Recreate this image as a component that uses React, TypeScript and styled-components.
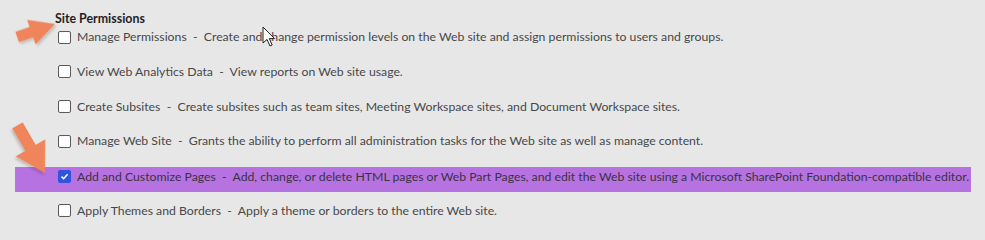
import React from "react";
import styled, { createGlobalStyle } from "styled-components";

const Global = createGlobalStyle`
  html, body { margin: 0; padding: 0; background: #e7e7e7; }
  body { font-family: "Lato", "Noto Sans", sans-serif; }
`;

const Page = styled.div`
  position: relative;
  width: 985px;
  height: 229px;
  padding-top: 12px;
  box-sizing: border-box;
  overflow: hidden;
`;

const Title = styled.div`
  margin-left: 55px;
  height: 14px;
  line-height: 14px;
  font-size: 12.4px;
  font-weight: 700;
  color: #1f1f1f;
`;

const List = styled.div`
  display: flex;
  flex-direction: column;
  margin-left: 15px;
  width: 956px;
`;

const Row = styled.div<{ $hl?: boolean }>`
  display: flex;
  align-items: ${(p) => (p.$hl ? "flex-start" : "center")};
  gap: 6px;
  box-sizing: border-box;
  padding-left: 43px;
  height: ${(p) => (p.$hl ? "25px" : "22px")};
  padding-top: ${(p) => (p.$hl ? "3px" : "0")};
  margin-top: ${(p) => (p.$hl ? "1.8px" : "0")};
  margin-bottom: ${(p) => (p.$hl ? "8px" : "12.8px")};
  background: ${(p) => (p.$hl ? "#b772e2" : "transparent")};
`;

const Box = styled.span<{ $checked?: boolean }>`
  flex: none;
  width: 13px;
  height: 13px;
  box-sizing: border-box;
  border-radius: 2px;
  border: 1px solid ${(p) => (p.$checked ? "#2f55e0" : "#5a5a5a")};
  background: ${(p) => (p.$checked ? "#2f55e0" : "#ffffff")};
  display: flex;
  align-items: center;
  justify-content: center;
`;

const Label = styled.span<{ $hl?: boolean }>`
  font-size: 12.25px;
  line-height: 14px;
  white-space: pre;
  color: ${(p) => (p.$hl ? "#3a3340" : "#474747")};
`;

const Overlay = styled.svg`
  position: absolute;
  left: 0;
  top: 0;
  pointer-events: none;
`;

const rows = [
  "Manage Permissions  -  Create and change permission levels on the Web site and assign permissions to users and groups.",
  "View Web Analytics Data  -  View reports on Web site usage.",
  "Create Subsites  -  Create subsites such as team sites, Meeting Workspace sites, and Document Workspace sites.",
  "Manage Web Site  -  Grants the ability to perform all administration tasks for the Web site as well as manage content.",
  "Add and Customize Pages  -  Add, change, or delete HTML pages or Web Part Pages, and edit the Web site using a Microsoft SharePoint Foundation-compatible editor.",
  "Apply Themes and Borders  -  Apply a theme or borders to the entire Web site.",
];

function arrowPoints(L: number, H: number, W: number, s: number) {
  return [
    [0, 0],
    [-H, -W],
    [-H, -s],
    [-L, -s],
    [-L, s],
    [-H, s],
    [-H, W],
  ]
    .map((p) => p.join(","))
    .join(" ");
}

export default function App() {
  return (
    <>
      <Global />
      <Page>
        <Title>Site Permissions</Title>
        <List>
          {rows.map((t, i) => {
            const hl = i === 4;
            return (
              <Row key={i} $hl={hl}>
                <Box $checked={hl}>
                  {hl && (
                    <svg width="9" height="9" viewBox="0 0 9 9">
                      <path d="M1.5 4.6 L3.6 6.7 L7.6 2.2" fill="none" stroke="#fff" strokeWidth="1.6" />
                    </svg>
                  )}
                </Box>
                <Label $hl={hl}>{t}</Label>
              </Row>
            );
          })}
        </List>
        <Overlay width="985" height="229" viewBox="0 0 985 229">
          <defs>
            <filter id="sh" x="-30%" y="-30%" width="160%" height="160%">
              <feDropShadow dx="1" dy="2" stdDeviation="1.5" floodColor="#000" floodOpacity="0.22" />
            </filter>
          </defs>
          <polygon
            points={arrowPoints(40, 25, 13, 5.5)}
            fill="#f0845a"
            filter="url(#sh)"
            transform="translate(55 24) rotate(-19)"
          />
          <polygon
            points={arrowPoints(55, 29, 17, 6)}
            fill="#f0845a"
            filter="url(#sh)"
            transform="translate(45 173) rotate(60)"
          />
          <path
            d="M263 27 L263 43 L267 39.5 L270 46 L272.2 45 L269.3 38.6 L274.5 38.6 Z"
            fill="#fff"
            stroke="#222"
            strokeWidth="1"
            strokeLinejoin="round"
          />
        </Overlay>
      </Page>
    </>
  );
}
